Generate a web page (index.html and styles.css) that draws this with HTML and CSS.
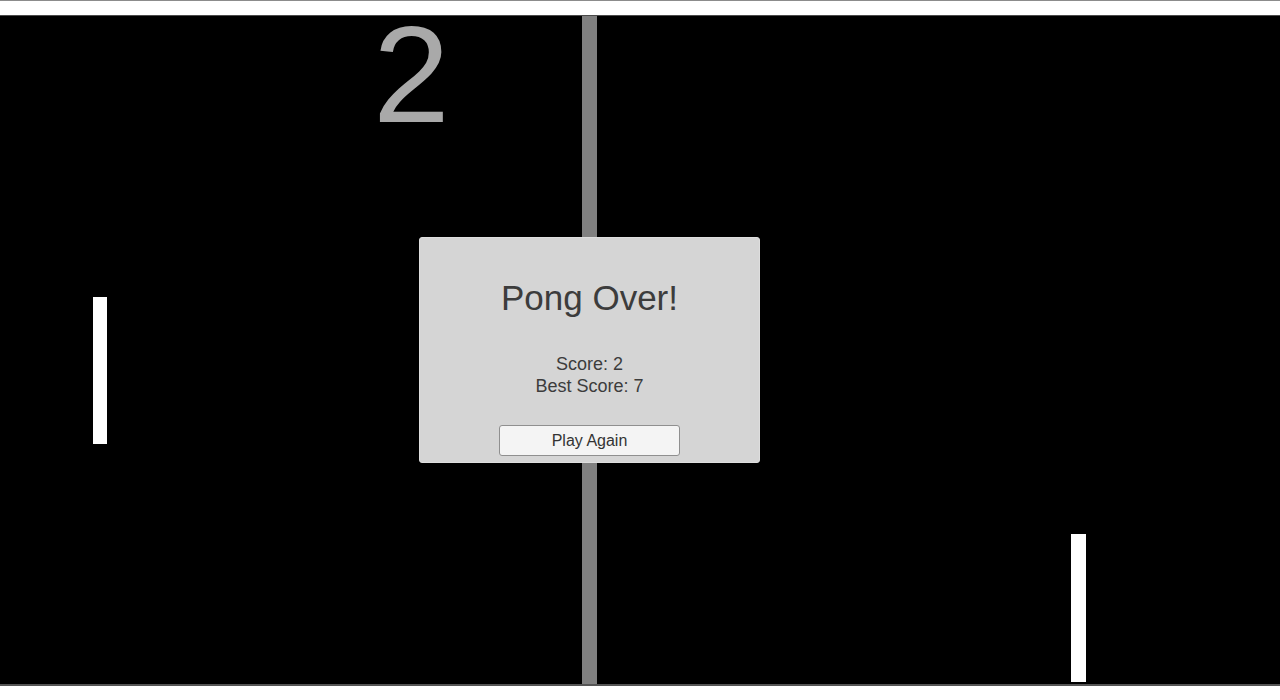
FILE: index.html
```html
<!DOCTYPE html>
<html>
<head>
<meta charset="utf-8">
<link rel="stylesheet" href="styles.css">
</head>
<body>
<div class="page">
  <div class="game">
    <div class="net"></div>
    <div class="score">2</div>
    <div class="paddle paddle-left"></div>
    <div class="paddle paddle-right"></div>
    <div class="panel">
      <div class="title">Pong Over!</div>
      <div class="stats">
        <div class="stat">Score: 2</div>
        <div class="stat">Best Score: 7</div>
      </div>
      <button class="again">Play Again</button>
    </div>
  </div>
</div>
</body>
</html>
```
FILE: styles.css
```css
html, body {
  margin: 0;
  padding: 0;
  background: #ffffff;
  width: 1280px;
  height: 700px;
  overflow: hidden;
  font-family: "Liberation Sans", Arial, sans-serif;
}
.page {
  border-top: 1px solid #8c8c8c;
  padding-top: 14px;
}
.game {
  position: relative;
  height: 668px;
  background: #000;
  border-top: 1px solid #4a4a4a;
  border-bottom: 2px solid #555;
}
.net {
  position: absolute;
  left: 582px;
  top: 0;
  width: 15px;
  height: 100%;
  background: #808080;
}
.score {
  position: absolute;
  left: 373px;
  top: 0;
  font-size: 138px;
  line-height: 116px;
  color: #a9a9a9;
}
.paddle {
  position: absolute;
  background: #ffffff;
}
.paddle-left {
  left: 93px;
  top: 281px;
  width: 14px;
  height: 147px;
}
.paddle-right {
  left: 1071px;
  top: 518px;
  width: 15px;
  height: 148px;
}
.panel {
  position: absolute;
  left: 419px;
  top: 221px;
  width: 341px;
  height: 226px;
  box-sizing: border-box;
  background: #d5d5d5;
  border: 1px solid #dedede;
  border-radius: 3px;
  display: flex;
  flex-direction: column;
  align-items: center;
  padding-top: 42px;
  color: #3c3c3c;
}
.title {
  font-size: 35px;
  line-height: 35px;
}
.stats {
  margin-top: 39px;
  text-align: center;
  font-size: 18px;
  line-height: 21.7px;
}
.again {
  margin-top: 28px;
  width: 181px;
  height: 31px;
  box-sizing: border-box;
  background: #f4f4f4;
  border: 1px solid #8f8f8f;
  border-radius: 3px;
  font-family: "Liberation Sans", Arial, sans-serif;
  font-size: 16px;
  line-height: 29px;
  padding: 0;
  color: #333333;
}
```
